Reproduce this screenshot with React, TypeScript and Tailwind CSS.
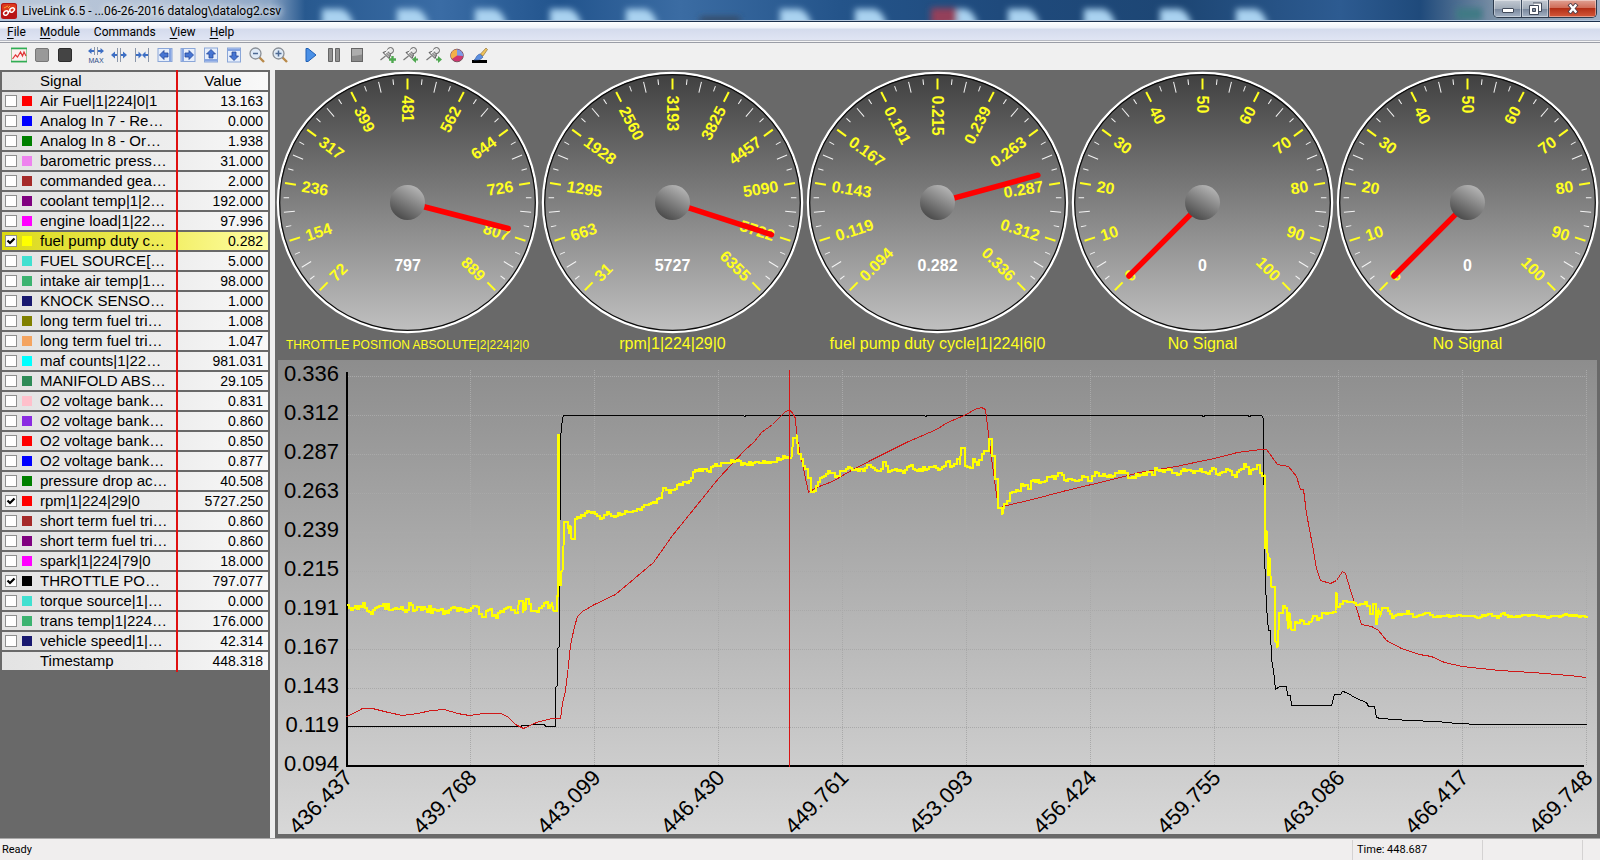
import { ReactNode, useState } from 'react';

type Point = [number, number];

interface Signal {
  name: string;
  color: string;
  value: string;
  checked?: boolean;
}

interface GaugeProps {
  id: string;
  labels: string[];
  position: number;
  readout: string;
  caption: string;
  small?: boolean;
}

const SIGNALS: Signal[] = [
  { name: 'Air Fuel|1|224|0|1', color: '#ff0000', value: '13.163' },
  { name: 'Analog In 7 - Re…', color: '#0000ff', value: '0.000' },
  { name: 'Analog In 8 - Or…', color: '#008000', value: '1.938' },
  { name: 'barometric press…', color: '#ee82ee', value: '31.000' },
  { name: 'commanded gea…', color: '#a52a2a', value: '2.000' },
  { name: 'coolant temp|1|2…', color: '#800080', value: '192.000' },
  { name: 'engine load|1|22…', color: '#ff00ff', value: '97.996' },
  { name: 'fuel pump duty c…', color: '#ffff00', value: '0.282', checked: true },
  { name: 'FUEL SOURCE[…', color: '#40e0d0', value: '5.000' },
  { name: 'intake air temp|1…', color: '#3cb371', value: '98.000' },
  { name: 'KNOCK SENSO…', color: '#191970', value: '1.000' },
  { name: 'long term fuel tri…', color: '#808000', value: '1.008' },
  { name: 'long term fuel tri…', color: '#f4a460', value: '1.047' },
  { name: 'maf counts|1|22…', color: '#00ffff', value: '981.031' },
  { name: 'MANIFOLD ABS…', color: '#2e8b57', value: '29.105' },
  { name: 'O2 voltage bank…', color: '#ffc0cb', value: '0.831' },
  { name: 'O2 voltage bank…', color: '#8a2be2', value: '0.860' },
  { name: 'O2 voltage bank…', color: '#ff0000', value: '0.850' },
  { name: 'O2 voltage bank…', color: '#0000ff', value: '0.877' },
  { name: 'pressure drop ac…', color: '#008000', value: '40.508' },
  { name: 'rpm|1|224|29|0', color: '#ff0000', value: '5727.250', checked: true },
  { name: 'short term fuel tri…', color: '#a52a2a', value: '0.860' },
  { name: 'short term fuel tri…', color: '#800080', value: '0.860' },
  { name: 'spark|1|224|79|0', color: '#ff00ff', value: '18.000' },
  { name: 'THROTTLE PO…', color: '#000000', value: '797.077', checked: true },
  { name: 'torque source|1|…', color: '#40e0d0', value: '0.000' },
  { name: 'trans temp|1|224…', color: '#3cb371', value: '176.000' },
  { name: 'vehicle speed|1|…', color: '#191970', value: '42.314' },
];

const GAUGES: GaugeProps[] = [
  {
    id: 'throttle',
    labels: ['72', '154', '236', '317', '399', '481', '562', '644', '726', '807', '889'],
    position: 0.887,
    readout: '797',
    caption: 'THROTTLE POSITION ABSOLUTE|2|224|2|0',
    small: true,
  },
  {
    id: 'rpm',
    labels: ['31', '663', '1295', '1928', '2560', '3193', '3825', '4457', '5090', '5722', '6355'],
    position: 0.9,
    readout: '5727',
    caption: 'rpm|1|224|29|0',
  },
  {
    id: 'fuel',
    labels: ['0.094', '0.119', '0.143', '0.167', '0.191', '0.215', '0.239', '0.263', '0.287', '0.312', '0.336'],
    position: 0.777,
    readout: '0.282',
    caption: 'fuel pump duty cycle|1|224|6|0',
  },
  {
    id: 'empty1',
    labels: ['0', '10', '20', '30', '40', '50', '60', '70', '80', '90', '100'],
    position: 0,
    readout: '0',
    caption: 'No Signal',
  },
  {
    id: 'empty2',
    labels: ['0', '10', '20', '30', '40', '50', '60', '70', '80', '90', '100'],
    position: 0,
    readout: '0',
    caption: 'No Signal',
  },
];

const Y_LABELS = ['0.336', '0.312', '0.287', '0.263', '0.239', '0.215', '0.191', '0.167', '0.143', '0.119', '0.094'];
const X_LABELS = [
  '436.437', '439.768', '443.099', '446.430', '449.761', '453.093',
  '456.424', '459.755', '463.086', '466.417', '469.748',
];

const THROTTLE: Point[] = [
  [0, 356], [174, 356], [176, 355], [184, 355], [185, 354], [198, 354], [199, 356], [209, 356], [209, 317],
  [211, 315], [211, 278], [213, 276], [213, 215], [214, 90], [214, 68], [216, 48], [217, 45], [397, 45],
  [398, 46], [400, 45], [578, 45], [579, 46], [581, 45], [855, 45], [857, 46], [859, 45], [901, 45],
  [903, 46], [905, 45], [915, 45], [917, 48], [918, 177], [918, 185], [919, 212], [920, 237], [922, 260],
  [924, 260], [925, 288], [927, 300], [929, 319], [933, 316], [940, 316], [941, 325], [944, 325], [945, 335],
  [985, 335], [988, 324], [994, 324], [996, 321], [1000, 322], [1010, 328], [1020, 332], [1022, 336],
  [1028, 336], [1030, 347], [1034, 348], [1063, 350], [1090, 351], [1110, 353], [1135, 354], [1240, 354],
];

const RPM: Point[] = [
  [0, 346], [7, 343], [16, 338], [26, 338], [42, 342], [56, 345], [71, 343], [85, 340], [98, 339], [111, 343],
  [123, 345], [137, 343], [154, 343], [161, 346], [169, 354], [177, 358], [190, 352], [205, 348], [214, 348],
  [216, 333], [219, 320], [222, 295], [224, 275], [228, 256], [231, 246], [236, 241], [248, 234], [269, 224],
  [288, 208], [307, 192], [326, 165], [347, 139], [372, 108], [386, 93], [398, 80], [408, 71], [415, 62],
  [426, 54], [436, 44], [438, 42], [443, 39], [447, 44], [449, 48], [450, 63], [454, 85], [458, 103], [462, 122],
  [470, 117], [486, 111], [503, 101], [526, 89], [560, 72], [590, 59], [601, 52], [620, 44], [628, 39],
  [635, 37], [639, 39], [641, 55], [646, 95], [652, 138], [660, 135], [686, 129], [716, 121], [766, 109],
  [793, 102], [830, 96], [853, 91], [868, 88], [891, 82], [915, 79], [920, 79], [931, 94], [942, 96],
  [950, 106], [954, 119], [957, 119], [960, 143], [966, 175], [970, 198], [974, 210], [984, 213], [990, 210],
  [996, 201], [999, 203], [1004, 220], [1010, 238], [1015, 254], [1025, 256], [1032, 260], [1040, 270],
  [1055, 278], [1073, 284], [1085, 286], [1098, 292], [1116, 296], [1153, 300], [1186, 302], [1210, 304],
  [1223, 305], [1240, 307],
];

const FUEL: Point[] = [
  [0, 234], [10, 238], [16, 232], [22, 241], [30, 236], [50, 238], [58, 241], [62, 232], [66, 240], [72, 236],
  [88, 239], [96, 243], [104, 237], [122, 240], [130, 236], [135, 246], [141, 239], [147, 244], [164, 239],
  [171, 240], [173, 230], [176, 242], [178, 232], [179, 240], [180, 228], [184, 240], [195, 235], [205, 232],
  [207, 240], [210, 225], [211, 225], [211, 64], [212, 64], [212, 214], [214, 214], [214, 202], [216, 200],
  [218, 151], [221, 154], [223, 163], [224, 155], [225, 168], [228, 148], [238, 142], [248, 143], [253, 148],
  [260, 141], [267, 146], [278, 140], [293, 139], [302, 133], [315, 126], [317, 117], [322, 122], [336, 111],
  [340, 112], [348, 99], [360, 100], [374, 92], [388, 90], [398, 93], [408, 91], [426, 91], [436, 85],
  [445, 87], [447, 67], [450, 64], [452, 83], [456, 95], [461, 107], [464, 121], [467, 120], [471, 111],
  [481, 100], [488, 106], [493, 100], [503, 97], [516, 100], [520, 94], [528, 99], [536, 97], [537, 91],
  [541, 101], [548, 98], [556, 102], [564, 94], [570, 100], [585, 96], [593, 98], [599, 91], [605, 95],
  [610, 88], [613, 94], [615, 77], [618, 95], [623, 97], [626, 88], [630, 94], [635, 83], [639, 80], [642, 68],
  [645, 85], [648, 108], [651, 137], [655, 137], [656, 144], [658, 133], [663, 122], [671, 120], [674, 113],
  [681, 118], [684, 110], [700, 111], [701, 106], [707, 108], [713, 102], [717, 109], [728, 110], [735, 105],
  [743, 110], [748, 101], [760, 106], [770, 102], [776, 100], [781, 107], [796, 102], [805, 104], [808, 97],
  [816, 101], [821, 98], [830, 104], [836, 98], [846, 102], [853, 98], [861, 103], [865, 97], [871, 104],
  [881, 99], [888, 106], [897, 93], [902, 103], [910, 94], [913, 102], [918, 104], [919, 178], [920, 160],
  [922, 205], [923, 187], [924, 205], [925, 216], [928, 270], [930, 272], [931, 277], [933, 242], [936, 235],
  [940, 243], [942, 258], [943, 242], [945, 259], [948, 251], [953, 249], [960, 253], [965, 251], [967, 245],
  [970, 249], [975, 242], [986, 241], [989, 240], [990, 222], [991, 236], [996, 230], [1005, 231], [1011, 234],
  [1018, 231], [1023, 243], [1026, 233], [1029, 234], [1030, 254], [1032, 240], [1034, 244], [1036, 237],
  [1041, 240], [1045, 247], [1051, 243], [1060, 240], [1066, 246], [1081, 242], [1086, 246], [1110, 244],
  [1133, 246], [1141, 243], [1150, 247], [1156, 242], [1161, 246], [1186, 244], [1200, 247], [1216, 244],
  [1240, 245],
];

const linePath = (points: Point[]) => points.map(([x, y], i) => `${i ? 'L' : 'M'}${x} ${y}`).join('');

// repeatable noise in -1..1
function noise(x: number) {
  const n = Math.sin(x * 127.1) * 43758.5453;
  return (n - Math.floor(n)) * 2 - 1;
}

// fills the long stretches of a coarse trace with sensor ripple
function steppedPath(points: Point[]) {
  let d = `M${points[0][0]} ${points[0][1]}`;
  for (let i = 1; i < points.length; i++) {
    const [x0, y0] = points[i - 1];
    const [x1, y1] = points[i];
    let swing = 2;
    if (x1 < 209) swing = 4;
    if (x1 > 1070) swing = 1;
    for (let x = x0 + 2; x < x1 - 1; x += 2) {
      d += `H${x}V${Math.round(y0 + ((y1 - y0) * (x - x0)) / (x1 - x0) + noise(x) * swing)}`;
    }
    d += x1 - x0 > 2 ? `H${x1}V${y1}` : `L${x1} ${y1}`;
  }
  return d;
}

function Gauge({ id, labels, position, readout, caption, small }: GaugeProps) {
  const ticks = Array.from({ length: 41 }, (_, i) => i);
  return (
    <figure className="min-w-0">
      <svg viewBox="0 0 265 265" className="block w-full" fontFamily="'Liberation Sans', Arial, sans-serif">
        <defs>
          <linearGradient id={`face-${id}`} x1="0" y1="0" x2="0" y2="1">
            <stop offset="0" stopColor="#404040" />
            <stop offset="1" stopColor="#c0c0c0" />
          </linearGradient>
          <linearGradient id={`hub-${id}`} x1="0.75" y1="0.1" x2="0.25" y2="0.95">
            <stop offset="0" stopColor="#b0b0b0" />
            <stop offset="1" stopColor="#4a4a4a" />
          </linearGradient>
        </defs>
        <g transform="translate(132.5 132.5)">
          <circle r="129.5" fill={`url(#face-${id})`} stroke="#ffffff" strokeWidth="2.4" />
          <circle r="127.8" fill="none" stroke="#0c0c0c" strokeWidth="1.2" />
          {ticks.map((i) => {
            const major = i % 4 === 0;
            return (
              <line
                key={i}
                x1={major || i % 2 === 0 ? 113 : 118.5}
                x2="124"
                stroke={major ? '#ffff20' : '#f4f4f4'}
                strokeWidth={major ? 2 : 1}
                transform={`rotate(${135 + i * 6.75})`}
              />
            );
          })}
          {labels.map((label, i) => {
            const angle = 135 + i * 27;
            const left = angle <= 270;
            return (
              <text
                key={label}
                x={left ? -107 : 107}
                y="6"
                textAnchor={left ? 'start' : 'end'}
                fontSize="16"
                fontWeight="bold"
                fill="#ffff20"
                transform={`rotate(${left ? angle - 180 : angle})`}
              >
                {label}
              </text>
            );
          })}
          <line
            x1="14"
            x2="104"
            stroke="#ff0000"
            strokeWidth="5.5"
            strokeLinecap="round"
            transform={`rotate(${135 + position * 270})`}
          />
          <circle r="17.5" fill={`url(#hub-${id})`} />
          <text y="68" textAnchor="middle" fontSize="16" fontWeight="bold" fill="#ffffff">
            {readout}
          </text>
        </g>
      </svg>
      <figcaption
        className={`flex h-[22px] justify-center whitespace-nowrap text-[#ffff20] ${
          small ? 'pt-0.5 text-[12px] leading-4' : 'pt-px text-[16px] leading-4'
        }`}
      >
        {caption}
      </figcaption>
    </figure>
  );
}

function Chart() {
  return (
    <svg
      viewBox="0 0 1319 474"
      className="block w-full overflow-visible bg-linear-to-b from-[#8d8d8d] to-[#d8d8d8]"
      fontFamily="'Liberation Sans', Arial, sans-serif"
      fontSize="22"
    >
      <g transform="translate(68 10)">
        <g stroke="#a9a9a9" strokeDasharray="1 1" shapeRendering="crispEdges">
          {Y_LABELS.slice(0, 10).map((label, i) => (
            <line key={label} x1="0" x2="1240" y1={6.5 + i * 39} y2={6.5 + i * 39} />
          ))}
          {X_LABELS.slice(1).map((label, i) => (
            <line key={label} x1={124.5 + i * 124} x2={124.5 + i * 124} y1="0" y2="396" />
          ))}
        </g>
        {Y_LABELS.map((label, i) => (
          <text key={label} x="-7" y={11 + i * 39} textAnchor="end">
            {label}
          </text>
        ))}
        {X_LABELS.map((label, i) => (
          <text key={label} textAnchor="end" transform={`translate(${8 + i * 124} 409) rotate(-45)`}>
            {label}
          </text>
        ))}
        <path d="M1 2V396H1238" fill="none" stroke="#000000" strokeWidth="2" shapeRendering="crispEdges" />
        <g fill="none" transform="translate(0.5 0.5)" shapeRendering="crispEdges">
          <path d={linePath(THROTTLE)} stroke="#000000" />
          <path d={linePath(RPM)} stroke="#d01818" />
          <path d={steppedPath(FUEL)} stroke="#ffff00" strokeWidth="2" />
        </g>
        <line x1="443.5" x2="443.5" y1="0" y2="397" stroke="#d81414" shapeRendering="crispEdges" />
      </g>
    </svg>
  );
}

const Glass = ({ sign }: { sign: string }) => (
  <>
    <path d="M10 10l5 5" stroke="#b98a4a" strokeWidth="2.4" />
    <circle cx="6.5" cy="6.5" r="5.5" fill="#dfeaf6" stroke="#8a8f96" strokeWidth="1.3" />
    <path d={sign} stroke="#4d6a94" strokeWidth="1.5" />
  </>
);

const ArrowBox = ({ angle }: { angle: number }) => (
  <g transform={`rotate(${angle} 8 8)`}>
    <rect x="1" y="1.5" width="14" height="13" fill="#e6eefb" stroke="#8aa6d8" />
    <path d="M12 2h2.500v12H12z" fill="#86a5e2" />
    <path d="M2.500 8L7 3.500V6h4v4H7v2.500z" fill="#4675d2" stroke="#24489a" strokeWidth="0.8" />
  </g>
);

const Pin = ({ children }: { children: ReactNode }) => (
  <>
    <path d="M0.500 13l5-4" stroke="#777" strokeWidth="1.2" />
    <path d="M3 5.500l6 6 1.500-3.500L7 4z" fill="#b4b4b4" stroke="#4c4c4c" strokeWidth="0.9" />
    <path d="M6 5.500l3-3 3 3-3 3z" fill="#d6d6d6" stroke="#555" strokeWidth="0.7" />
    <circle cx="10.500" cy="3.500" r="3" fill="#e8e8e8" stroke="#555" strokeWidth="0.9" />
    <path d="M5 6.500l4-4" stroke="#fff" strokeWidth="1.2" />
    {children}
  </>
);

const TOOLS: { label: string; icon: ReactNode }[][] = [
  [
    {
      label: 'Chart',
      icon: (
        <>
          <rect x="0.5" y="1" width="15" height="14" fill="#fbeeee" stroke="#9ac79a" />
          <path d="M0 1.500h16M0 14.500h16" stroke="#2fae55" strokeWidth="1.5" />
          <path d="M1.500 12l3-4 2 2 3-5 2 4 1.500-4L15 9" fill="none" stroke="#e03535" strokeWidth="1.2" />
        </>
      ),
    },
    { label: 'Stop log', icon: <rect x="1.5" y="1.5" width="13" height="13" rx="1.5" fill="#999" stroke="#777" /> },
    { label: 'Record', icon: <rect x="1.5" y="1.5" width="13" height="13" rx="1.5" fill="#444" stroke="#2c2c2c" /> },
  ],
  [
    {
      label: 'Maximum width',
      icon: (
        <>
          <path d="M6.500 0v8M9.500 0v8" stroke="#8a96aa" />
          <path d="M0 4l3.500-3v2H6v2H3.500v2zM16 4l-3.500-3v2H10v2h2.500v2z" fill="#3d6fc4" />
          <text x="8" y="15.5" textAnchor="middle" fontSize="7" fill="#2d4d86" fontFamily="'Liberation Sans', sans-serif">
            MAX
          </text>
        </>
      ),
    },
    {
      label: 'Expand',
      icon: (
        <>
          <path d="M6.500 1v14M9.500 1v14" stroke="#8a96aa" />
          <path d="M0 8l4-3.500V7h2v2H4v2.500zM16 8l-4-3.500V7h-2v2h2v2.500z" fill="#3d6fc4" />
        </>
      ),
    },
    {
      label: 'Shrink',
      icon: (
        <>
          <path d="M1.500 1v14M14.500 1v14" stroke="#8a96aa" />
          <path d="M8 8L4.500 4.500V7H2v2h2.500v2.500zM8 8l3.500-3.500V7H14v2h-2.500v2.500z" fill="#3d6fc4" />
        </>
      ),
    },
    { label: 'Left', icon: <ArrowBox angle={0} /> },
    { label: 'Right', icon: <ArrowBox angle={180} /> },
    { label: 'Up', icon: <ArrowBox angle={90} /> },
    { label: 'Down', icon: <ArrowBox angle={270} /> },
    { label: 'Zoom out', icon: <Glass sign="M4 6.500h5" /> },
    { label: 'Zoom in', icon: <Glass sign="M3.500 6.500h6M6.500 3.500v6" /> },
  ],
  [
    { label: 'Play', icon: <path d="M3 1.500h2L13 8l-8 6.500H3z" fill="#4a90e6" stroke="#1f5fb4" /> },
    {
      label: 'Pause',
      icon: <path d="M2.500 1.500h4v13h-4zM9.500 1.500h4v13h-4z" fill="#929292" stroke="#666" />,
    },
    {
      label: 'Stop',
      icon: (
        <>
          <rect x="2.5" y="1.5" width="11" height="13" fill="#8a8a8a" stroke="#666" />
          <path d="M3 9c4 0 6-1 10-1.500V2H3z" fill="#adadad" />
        </>
      ),
    },
  ],
  [
    { label: 'Add marker', icon: <Pin><path d="M12.500 9v7M9 12.500h7" stroke="#4fa850" strokeWidth="2.4" /></Pin> },
    { label: 'Previous marker', icon: <Pin><path d="M9 12.500l4-3.500v2.500h2v2h-2V16z" fill="#4fa850" /></Pin> },
    { label: 'Next marker', icon: <Pin><path d="M16 12.500L12 9v2.500h-2v2h2V16z" fill="#4fa850" /></Pin> },
    {
      label: 'Statistics',
      icon: (
        <>
          <circle cx="8" cy="8.5" r="6.3" fill="#d0356f" stroke="#7a5560" />
          <path d="M8 8.500V2.500A6 6 0 0 0 3 12z" fill="#f3b04a" />
          <path d="M8 8.500V2.500a6 6 0 0 1 6 6.500z" fill="#7f9be6" />
        </>
      ),
    },
    {
      label: 'Colors',
      icon: (
        <>
          <path d="M0 14.500h15" stroke="#000" strokeWidth="3" />
          <path d="M2 13c2-1 2-5 6-6l3 3c-2 3-5 3-9 3z" fill="#5b8fe0" stroke="#33589c" strokeWidth="0.6" />
          <path d="M8.500 7L14 1l1.500 1.500L11 9z" fill="#f0c35a" stroke="#7d6330" strokeWidth="0.6" />
        </>
      ),
    },
  ],
];

const MENU: [string, string][] = [['F', 'ile'], ['M', 'odule'], ['', 'Commands'], ['V', 'iew'], ['H', 'elp']];

// desktop icons seen through the glass caption
const SHADES = [337, 412, 490, 565, 641, 795, 870, 961, 1023, 1099, 1175, 1251];

function TitleBar() {
  return (
    <header className="relative flex h-[22px] items-center justify-between overflow-hidden border-b border-[#1b2f4c] bg-[linear-gradient(to_right,#b9c6d8_0px,#b3c2d6_160px,#8ba5c5_270px,#28598f_305px,#3a6ca5_440px,#22548d_560px,#3b6ca3_680px,#24548a_840px,#1f4a7c_1000px,#1d4674_1180px,#2d5b91_1340px,#1f4a7b_1420px,#8094a8_1500px,#9eb0c6_1600px)] pl-px">
      <svg className="absolute inset-0 h-full w-full" aria-hidden="true">
        <defs>
          <filter id="soft" x="-50%" y="-50%" width="200%" height="200%">
            <feGaussianBlur stdDeviation="3" />
          </filter>
        </defs>
        <g filter="url(#soft)">
          {SHADES.map((x) => (
            <path key={x} d={`M${x - 15} 9h20q10 4 12 19h-32z`} fill="#a9d2f0" />
          ))}
          <rect x="931" y="8" width="26" height="18" fill="#94405a" />
          <rect x="1456" y="8" width="26" height="12" fill="#3f7a84" />
          <rect x="700" y="17" width="40" height="6" fill="#34465e" />
        </g>
        <path d="M0 20.500H4000" stroke="#b4c6dc" />
      </svg>
      <div className="relative flex items-center gap-[5px]">
        <svg viewBox="0 0 16 16" className="size-4">
          <rect width="16" height="16" rx="2.5" fill="#b81414" />
          <rect x="1" y="1" width="14" height="7" rx="2" fill="#dc3a1c" />
          <ellipse cx="5" cy="10" rx="2.6" ry="1.9" stroke="#fff" strokeWidth="1.4" fill="none" transform="rotate(-35 5 10)" />
          <ellipse cx="11" cy="7" rx="2.6" ry="1.9" stroke="#fff" strokeWidth="1.4" fill="none" transform="rotate(-35 11 7)" />
          <path d="M6.500 9.500l3-2" stroke="#fff" strokeWidth="1.4" />
          <path d="M3 5l4-2M7 5l2-2" stroke="#f3a23a" />
        </svg>
        <h1 className="font-[Roboto,sans-serif] text-[12px] leading-5 whitespace-nowrap text-black [text-shadow:0_0_6px_#fff,0_0_10px_#fff]">
          LiveLink 6.5 - ...06-26-2016 datalog\datalog2.csv
        </h1>
      </div>
      <div className="relative mr-[3px] flex h-[18px] self-start overflow-hidden rounded-b-[5px] border border-t-0 border-[#2c3a4c]">
        <button
          aria-label="Minimize"
          className="flex w-7 items-end justify-center border-r border-[#3b4a5e] bg-[linear-gradient(#c3cad3,#a0abb8_50%,#76859a_51%,#a4b2c4)] pb-1 shadow-[inset_0_0_0_1px_#ffffff66]"
        >
          <span className="h-[5px] w-3 rounded-[1px] border border-[#414a5a] bg-white" />
        </button>
        <button
          aria-label="Restore"
          className="flex w-[27px] items-center justify-center border-r border-[#3b4a5e] bg-[linear-gradient(#c3cad3,#a0abb8_50%,#76859a_51%,#a4b2c4)] shadow-[inset_0_0_0_1px_#ffffff66]"
        >
          <svg viewBox="0 0 13 13" className="size-[13px]">
            <path d="M4 1h8.500v8.500H10" fill="#fff" stroke="#414a5a" />
            <path d="M.5 3.500h9v9h-9z" fill="#fff" stroke="#414a5a" />
            <path d="M3.500 6.500h3v3h-3z" fill="#8794a6" stroke="#414a5a" />
          </svg>
        </button>
        <button
          aria-label="Close"
          className="flex w-[47px] items-center justify-center bg-[linear-gradient(#e0a193,#cf6a55_48%,#b32f16_50%,#d4583a)] shadow-[inset_0_0_0_1px_#ffffff66]"
        >
          <svg viewBox="0 0 12 11" className="h-[11px] w-3">
            <path d="M3.500 2.500l5 6M8.500 2.500l-5 6" stroke="#53404a" strokeWidth="4.2" strokeLinecap="square" />
            <path d="M3.500 2.500l5 6M8.500 2.500l-5 6" stroke="#fff" strokeWidth="2.4" strokeLinecap="square" />
          </svg>
        </button>
      </div>
    </header>
  );
}

function SignalTable() {
  const [selected, setSelected] = useState(7);
  const nameCell = 'h-[18px] border-r-2 border-[#e01010] p-0';
  const plainName = 'bg-linear-to-r from-[#e3e3e3] to-[#eeeeee]';
  const plainValue = 'bg-linear-to-r from-[#eeeeee] to-[#f9f9f9]';

  return (
    <aside className="w-[270px] flex-none bg-[#696969] px-[2px]">
      <table className="w-full table-fixed border-separate border-spacing-x-0 border-spacing-y-[2px] bg-[linear-gradient(to_right,transparent_174px,#e01010_174px,#e01010_176px,transparent_176px)] text-[15px] leading-[18px] text-black">
        <colgroup>
          <col className="w-[176px]" />
          <col />
        </colgroup>
        <thead>
          <tr>
            <th className={`${nameCell} ${plainName} pl-[38px] text-left font-normal`}>Signal</th>
            <th className={`h-[18px] p-0 text-center font-normal ${plainValue}`}>Value</th>
          </tr>
        </thead>
        <tbody>
          {SIGNALS.map((signal, i) => (
            <tr key={i} onClick={() => setSelected(i)}>
              <td
                className={`${nameCell} ${
                  i === selected ? 'bg-linear-to-r from-[#dbd90f] to-[#f1ee5c]' : plainName
                }`}
              >
                <div className="flex h-[18px] items-center pl-[3px]">
                  <span className="relative flex size-3 flex-none">
                    <input
                      id={`signal-${i}`}
                      type="checkbox"
                      defaultChecked={signal.checked}
                      className="peer size-3 appearance-none border border-[#8e8f8f] bg-white"
                    />
                    <svg
                      viewBox="0 0 12 12"
                      className="pointer-events-none absolute inset-0 hidden peer-checked:block"
                    >
                      <path d="M2.500 5.500L5 8l4.500-4.500" fill="none" stroke="#000" strokeWidth="2.2" />
                    </svg>
                  </span>
                  <span className="mr-2 ml-[5px] size-2.5 flex-none" style={{ backgroundColor: signal.color }} />
                  <label htmlFor={`signal-${i}`} className="overflow-hidden whitespace-nowrap">
                    {signal.name}
                  </label>
                </div>
              </td>
              <td
                className={`h-[18px] p-0 pr-[5px] text-right text-[14px] ${
                  i === selected ? 'bg-linear-to-r from-[#f3f06a] to-[#fffda4]' : plainValue
                }`}
              >
                {signal.value}
              </td>
            </tr>
          ))}
          <tr>
            <td className={`${nameCell} ${plainName} pl-[38px]`}>Timestamp</td>
            <td className={`h-[18px] p-0 pr-[5px] text-right text-[14px] ${plainValue}`}>448.318</td>
          </tr>
        </tbody>
      </table>
    </aside>
  );
}

export default function App() {
  return (
    <div className="flex min-h-screen flex-col bg-[#f0f0f0] font-['Liberation_Sans',Arial,sans-serif]">
      <TitleBar />
      <nav className="flex h-[21px] border-b border-[#9a9da6] bg-[linear-gradient(#ffffff,#eef1f9_6px,#d4dbed_7px,#e0e5f3_18px,#b8bbc4_18px,#b8bbc4_19px,#f4f4f4_19px)] font-[Roboto,sans-serif] text-[12px] leading-5 text-black">
        {MENU.map(([key, rest]) => (
          <button key={rest} className="flex px-[7px]">
            {key && <span className="underline underline-offset-2">{key}</span>}
            {rest}
          </button>
        ))}
      </nav>
      <div className="flex h-[27px] items-center gap-2 bg-[#f0f0f0] pb-1 pl-[7px]">
        {TOOLS.map((group, i) => (
          <div key={i} className="flex">
            {group.map((tool) => (
              <button key={tool.label} aria-label={tool.label} className="flex w-[23px] justify-center">
                <svg viewBox="0 0 16 16" fill="none" className="size-4">
                  {tool.icon}
                </svg>
              </button>
            ))}
          </div>
        ))}
      </div>

      <main className="flex flex-1">
        <SignalTable />
        <div className="w-[5px] flex-none bg-[#eeeeee]" />
        <section className="min-w-0 flex-1 bg-[#696969]">
          <div className="grid grid-cols-5">
            {GAUGES.map((gauge) => (
              <Gauge key={gauge.id} {...gauge} />
            ))}
          </div>
          <div className="px-[3px] pt-[3px] pb-1">
            <Chart />
          </div>
        </section>
      </main>

      <footer className="flex h-[22px] items-stretch border-t border-[#a8a8a8] bg-[#f0eeee] pt-px font-[Roboto,sans-serif] text-[11px] leading-5 text-black">
        <span className="flex-1 pl-[2px]">Ready</span>
        <span className="w-[130px] border-l border-[#d4d2d2] pl-1">Time: 448.687</span>
        <span className="w-[100px] border-l border-[#d4d2d2]" />
        <span className="w-[18px] border-l border-[#d4d2d2]" />
      </footer>
    </div>
  );
}
